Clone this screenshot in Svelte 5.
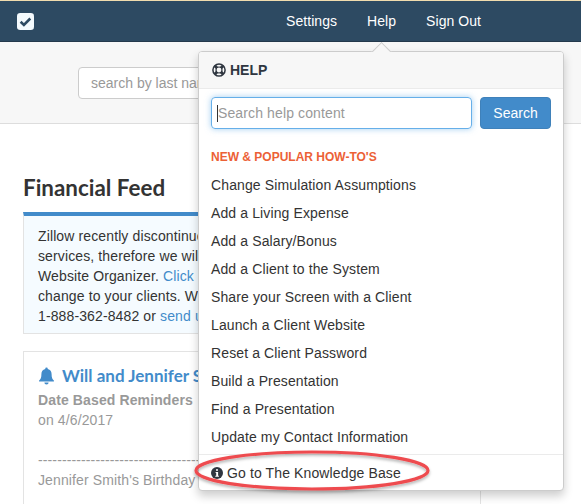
<script>
	const links = [
		'Change Simulation Assumptions',
		'Add a Living Expense',
		'Add a Salary/Bonus',
		'Add a Client to the System',
		'Share your Screen with a Client',
		'Launch a Client Website',
		'Reset a Client Password',
		'Build a Presentation',
		'Find a Presentation',
		'Update my Contact Information'
	];
</script>

<div class="page">
	<header class="navbar">
		<span class="logo">
			<svg viewBox="0 0 16 16" width="17" height="17">
				<rect width="16" height="16" rx="3" fill="#f4fafd" />
				<path d="M3.4 8.2l3.1 3 6-6" fill="none" stroke="#2d4a62" stroke-width="2.4" />
			</svg>
		</span>
		<nav>
			<a href="#settings">Settings</a>
			<a href="#help">Help</a>
			<a href="#signout">Sign Out</a>
		</nav>
	</header>

	<div class="subbar">
		<input class="client-search" placeholder="search by last name" />
	</div>

	<main>
		<h1>Financial Feed</h1>
		<div class="notice">
			Zillow recently discontinued some of its<br />
			services, therefore we will be removing the<br />
			Website Organizer. <a href="#click">Click here</a> to see this<br />
			change to your clients. We are available at<br />
			1-888-362-8482 or <a href="#send">send us a message</a>.
		</div>
		<div class="card">
			<h2>
				<svg viewBox="0 0 16 17" width="17" height="18">
					<path d="M8 0.5a1.2 1.2 0 0 1 1.2 1.3c2.4.5 3.6 2.4 3.6 4.7 0 3.5.8 5 2.2 6.3v1H1v-1c1.4-1.3 2.2-2.8 2.2-6.3 0-2.3 1.2-4.2 3.6-4.7A1.2 1.2 0 0 1 8 .5zM6 14.6h4a2 2 0 0 1-4 0z" fill="#428bca" />
				</svg>
				<a href="#will">Will and Jennifer Smith</a>
			</h2>
			<p><b>Date Based Reminders</b><br />on 4/6/2017</p>
			<p class="dashes">----------------------------------------------------</p>
			<p>Jennifer Smith's Birthday</p>
		</div>
	</main>

	<section class="popover">
		<div class="arrow"></div>
		<div class="pop-title">
			<svg viewBox="0 0 14 14" width="14" height="14">
				<circle cx="7" cy="7" r="6.1" fill="none" stroke="#2f3640" stroke-width="1.5" />
				<circle cx="7" cy="7" r="3" fill="none" stroke="#2f3640" stroke-width="1.2" />
				<path d="M2.8 2.8l2.2 2.2M11.2 2.8L9 5M2.8 11.2L5 9M11.2 11.2L9 9" stroke="#2f3640" stroke-width="3" />
			</svg>
			HELP
		</div>
		<div class="pop-body">
			<div class="search-row">
				<div class="help-input"><span class="caret"></span>Search help content</div>
				<button>Search</button>
			</div>
			<h3>NEW &amp; POPULAR HOW-TO'S</h3>
			<ul>
				{#each links as link}
					<li>{link}</li>
				{/each}
			</ul>
		</div>
		<div class="pop-footer">
			<svg viewBox="0 0 12 12" width="12" height="12">
				<circle cx="6" cy="6" r="6" fill="#2f3640" />
				<path d="M5 2.2h2v1.6H5zM4.6 5h2.5v3.7h.8v1.1H4.3V8.7h.9V6.1h-.6z" fill="#fff" />
			</svg>
			Go to The Knowledge Base
		</div>
	</section>

	<svg class="annotation" width="250" height="50" viewBox="0 0 250 50">
		<defs>
			<filter id="soft" x="-10%" y="-30%" width="120%" height="170%">
				<feDropShadow dx="0" dy="2" stdDeviation="1.5" flood-color="#000" flood-opacity="0.3" />
			</filter>
		</defs>
		<ellipse cx="125" cy="23.5" rx="116" ry="18.5" fill="none" stroke="#ee4c50" stroke-width="3.2" filter="url(#soft)" />
	</svg>
</div>

<style>
	:global(body) {
		background: #fff;
		overflow: hidden;
	}

	.page {
		position: relative;
		width: 581px;
		height: 504px;
		overflow: hidden;
		font-family: "Liberation Sans", Arial, sans-serif;
		font-size: 14px;
		line-height: 20px;
		letter-spacing: 0.12px;
		color: #333;
	}

	.navbar {
		display: flex;
		align-items: center;
		justify-content: space-between;
		height: 40px;
		border-top: 1px solid #f0dcae;
		border-bottom: 1px solid #24394c;
		background: #2d4a62;
		padding: 0 100px 0 17px;
	}

	.logo {
		display: flex;
	}

	nav {
		display: flex;
		gap: 30px;
		margin-top: -1px;
		letter-spacing: 0.05px;
	}

	nav a {
		color: #fff;
		text-decoration: none;
	}

	.subbar {
		box-sizing: border-box;
		height: 82px;
		background: #f7f7f7;
		border-bottom: 1px solid #ddd;
		padding-top: 25px;
		padding-left: 78px;
	}

	.client-search {
		display: block;
		box-sizing: border-box;
		width: 260px;
		height: 32px;
		padding: 0 12px;
		border: 1px solid #ccc;
		border-radius: 4px;
		background: #fff;
		font: inherit;
	}

	.client-search::placeholder {
		color: #999;
		opacity: 1;
	}

	main {
		padding: 49px 100px 0 23px;
	}

	h1 {
		margin: 0 0 9px;
		font-family: Lato, sans-serif;
		font-size: 22.4px;
		line-height: 30px;
		font-weight: 700;
		letter-spacing: 0;
		color: #333;
	}

	.notice {
		height: 122px;
		box-sizing: border-box;
		margin-bottom: 17px;
		padding: 10px 14px;
		background: #f5fbff;
		border: 1px solid #e3e3e3;
		border-top: 4px solid #428bca;
		white-space: nowrap;
	}

	a {
		color: #428bca;
		text-decoration: none;
	}

	.card {
		height: 200px;
		padding: 14px;
		border: 1px solid #e3e3e3;
		color: #999;
		white-space: nowrap;
	}

	h2 {
		display: flex;
		align-items: center;
		gap: 7px;
		margin: 0 0 4px;
		font-family: Lato, sans-serif;
		font-size: 17px;
		line-height: 20px;
		font-weight: 700;
		letter-spacing: 0;
	}

	.card p {
		margin: 0 0 20px;
	}

	.card p b {
		color: #999;
	}

	.card p.dashes {
		margin: 0;
		overflow: hidden;
	}

	.popover {
		position: absolute;
		left: 198px;
		top: 51px;
		box-sizing: border-box;
		width: 366px;
		height: 440px;
		background: #fff;
		border: 1px solid #ccc;
		border-radius: 4px;
		box-shadow: 0 5px 10px rgba(0, 0, 0, 0.2);
	}

	.arrow {
		position: absolute;
		left: 175px;
		top: -7px;
		width: 14px;
		height: 14px;
		background: #f7f7f7;
		border-left: 1px solid #ccc;
		border-top: 1px solid #ccc;
		transform: rotate(45deg);
	}

	.pop-title {
		position: relative;
		display: flex;
		align-items: center;
		gap: 4px;
		height: 37px;
		padding: 0 13px 0;
		box-sizing: border-box;
		background: #f7f7f7;
		border-bottom: 1px solid #ebebeb;
		border-radius: 3px 3px 0 0;
		font-weight: 700;
		letter-spacing: 0;
		color: #2f3640;
	}

	.pop-body {
		padding: 8px 12px 0;
	}

	.search-row {
		display: flex;
		gap: 8px;
	}

	.help-input {
		display: flex;
		align-items: center;
		box-sizing: border-box;
		width: 261px;
		height: 32px;
		padding: 0 5px;
		border: 1px solid #66afe9;
		border-radius: 4px;
		box-shadow: 0 0 6px rgba(102, 175, 233, 0.6);
		color: #999;
	}

	.caret {
		width: 1px;
		height: 17px;
		background: #333;
	}

	button {
		width: 71px;
		height: 32px;
		padding: 0;
		border: 1px solid #3f81ba;
		border-radius: 4px;
		background: #428bca;
		color: #fff;
		font: inherit;
	}

	h3 {
		margin: 21px 0 7px;
		font-size: 12px;
		line-height: 14px;
		font-weight: 700;
		letter-spacing: 0;
		color: #ec6136;
	}

	ul {
		margin: 0;
		padding: 0;
		list-style: none;
	}

	li {
		height: 28px;
		line-height: 28px;
		color: #333;
	}

	.pop-footer {
		display: flex;
		align-items: center;
		gap: 4px;
		height: 36px;
		margin-top: 3px;
		padding: 0 12px;
		border-top: 1px solid #ebebeb;
		color: #333;
	}

	.annotation {
		position: absolute;
		left: 187px;
		top: 447px;
	}
</style>
